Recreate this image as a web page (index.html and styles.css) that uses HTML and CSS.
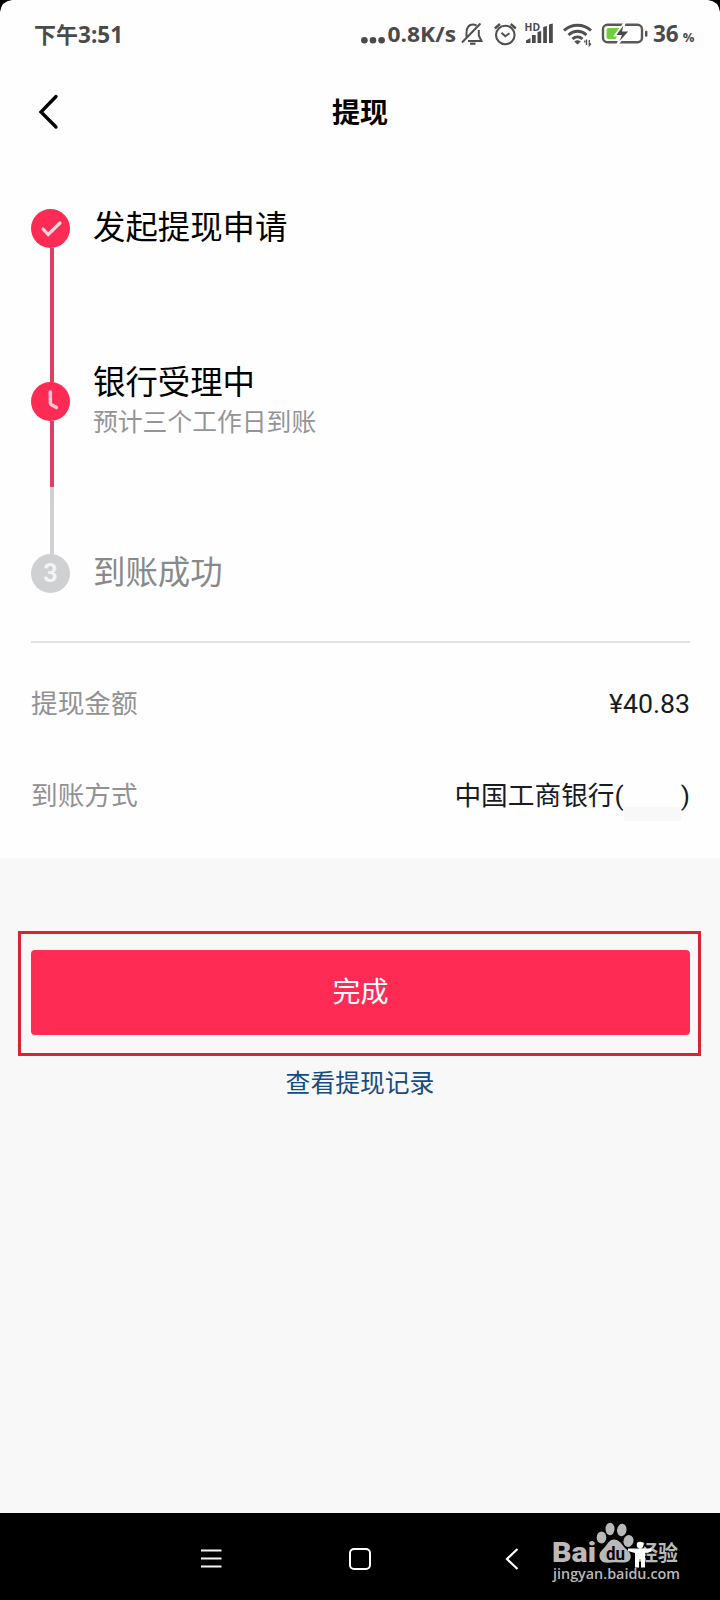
FILE: index.html
```html
<!DOCTYPE html>
<html lang="zh-CN">
<head>
<meta charset="utf-8">
<title>提现</title>
<link rel="stylesheet" href="styles.css">
</head>
<body>
<div class="screen">
  <header class="status">
    <div class="clock">下午<span class="clock-num">3:51</span></div>
    <svg class="status-icons" width="350" height="70" viewBox="350 0 350 70">
      <g fill="#4a4a4a">
        <circle cx="364.4" cy="40.3" r="3.3"/><circle cx="373" cy="40.3" r="3.3"/><circle cx="381.6" cy="40.3" r="3.3"/>
        <text class="st" x="387.500" y="42" font-size="22" textLength="68.500" lengthAdjust="spacingAndGlyphs">0.8K/s</text>
      </g>
      <g fill="none" stroke="#505050" stroke-width="2">
        <path d="M466.500 38V33C466.500 27.500 469 24.500 473 24.500C474.500 24.500 475.500 24.900 476.500 25.600M478.800 30V35.500L481.500 41H468M462 42.500L480.500 23.500"/>
        <path d="M470 43.700H475.500" stroke-width="2.200"/>
        <circle cx="505.300" cy="35" r="9.300" stroke-width="2.100"/>
        <path d="M501.500 32.800L505.300 36.300L509.500 33.200" />
        <path d="M494.800 28.500L500 24M510.700 24L515.800 28.500" stroke-width="2.400"/>
      </g>
      <g fill="#4a4a4a">
        <text class="st" x="524.500" y="31" font-size="10.500" textLength="15.500" lengthAdjust="spacingAndGlyphs">HD</text>
        <path d="M526 43v-2.500l4.500-2.500v5zM532 43v-8h3.700v8zM537.500 43v-11l3.700-1v12zM543.200 43v-16l3.700-1v17zM549 43v-18.500l3.800-1v19.500z"/>
      </g>
      <g fill="none" stroke="#505050" stroke-width="2.900">
        <path d="M564 30.500C571.500 23.500 583.500 23.500 591 30.500M568.500 35C574 30 581 30 586.500 35M572.500 39C575.500 36.200 579.500 36.200 582.500 39"/>
      </g>
      <path d="M574.200 41.500Q577.500 39 580.800 41.500L577.500 44.500z" fill="#505050"/>
      <path d="M586.500 39.500V45M584.800 42.500V40.500M589.300 40V45.500L591 43.500" stroke="#505050" stroke-width="1.300" fill="none"/>
      <rect x="603" y="24.800" width="39" height="17.500" rx="4.500" fill="#fff" stroke="#585858" stroke-width="2.400"/>
      <path d="M608.500 28H619.500L614 35.500H617.500L615.500 39H608.500Q606.500 39 606.500 37V30Q606.500 28 608.500 28z" fill="#70cf3c"/>
      <path d="M625 22L614.800 35.800H620.800L617 45L630 30.800H623z" fill="#484848" stroke="#fff" stroke-width="1.600"/>
      <rect x="645" y="30.800" width="2.400" height="6" rx="1" fill="#505050"/>
    </svg>
    <div class="percent">36<small>%</small></div>
  </header>

  <nav class="titlebar">
    <svg width="22" height="36" viewBox="0 0 22 36"><path d="M18 2.500L3 18L18 33" fill="none" stroke="#000" stroke-width="3.300" stroke-linecap="round"/></svg>
    <h1>提现</h1>
  </nav>

  <ol class="steps">
    <li class="step">
      <div class="rail">
        <svg class="dot" viewBox="0 0 39 39"><circle cx="19.500" cy="19.500" r="19.500" fill="#fe2c55"/><path d="M12 20L17.200 25.500L29 14" fill="none" stroke="#ffd5de" stroke-width="3.200" stroke-linecap="round"/></svg>
        <i class="line red"></i>
      </div>
      <div class="label">发起提现申请</div>
    </li>
    <li class="step">
      <div class="rail">
        <svg class="dot" viewBox="0 0 39 39"><circle cx="19.500" cy="19.500" r="19.500" fill="#fe2c55"/><path d="M19.300 10V20.500Q19.300 22 20.500 22.700L25.500 25.500" fill="none" stroke="#ffc5d1" stroke-width="3.500" stroke-linecap="round"/></svg>
        <i class="line red"></i>
        <i class="line grey"></i>
      </div>
      <div class="label two">银行受理中<p>预计三个工作日到账</p></div>
    </li>
    <li class="step">
      <div class="rail"><span class="dot num">3</span></div>
      <div class="label muted">到账成功</div>
    </li>
  </ol>

  <dl class="details">
    <div class="row"><dt>提现金额</dt><dd>¥40.83</dd></div>
    <div class="row"><dt>到账方式</dt><dd>中国工商银行(<span class="mask"></span>)</dd></div>
  </dl>

  <main class="actions">
    <div class="frame"><button class="done">完成</button></div>
    <a class="records">查看提现记录</a>
  </main>

  <footer class="sysnav">
    <svg width="22" height="22" viewBox="0 0 22 22"><path d="M1 2.500H21.500M1 10.500H21.500M1 18.500H21.500" stroke="#f5f5f5" stroke-width="2"/></svg>
    <svg width="22" height="22" viewBox="0 0 22 22"><rect x="1" y="1" width="20" height="20" rx="4" fill="none" stroke="#fff" stroke-width="2"/></svg>
    <svg width="22" height="22" viewBox="0 0 22 22"><path d="M19.500 1L9 11L19.500 21" fill="none" stroke="#fff" stroke-width="2.200"/></svg>
  </footer>

  <svg class="watermark" width="190" height="87" viewBox="530 1513 190 87">
    <g fill="#b9b9b9">
      <ellipse cx="601.500" cy="1537.500" rx="4.800" ry="6"/>
      <ellipse cx="610" cy="1529" rx="4.500" ry="6.200"/>
      <ellipse cx="621.800" cy="1530" rx="4.700" ry="6.200" transform="rotate(8 621.800 1530)"/>
      <ellipse cx="628.500" cy="1541" rx="5" ry="6" transform="rotate(15 628.500 1541)"/>
      <path d="M614 1539.500C619 1539.500 621.500 1544 625 1548C629 1551.500 631.500 1554 630.500 1558C629.500 1562 626 1563 621 1562.500Q614 1561.800 608 1562.700C602 1563 600 1560 599.500 1556.500C599 1552 602.500 1550 605 1547C608 1543 610 1539.500 614 1539.500z"/>
      <text class="brand" x="552" y="1562" font-size="28.500" textLength="44" lengthAdjust="spacingAndGlyphs">Bai</text>
      <text class="han" x="638" y="1560" font-size="21" textLength="40" lengthAdjust="spacingAndGlyphs">经验</text>
      <text class="url" x="553" y="1578.500" font-size="15" textLength="127" lengthAdjust="spacingAndGlyphs">jingyan.baidu.com</text>
    </g>
    <text class="du" x="606" y="1559.500" font-size="19" fill="#080808" textLength="19" lengthAdjust="spacingAndGlyphs">du</text>
    <circle cx="640" cy="1545" r="3.300" fill="#fff"/>
    <path d="M628 1548.500H651.500V1551.500L645 1553V1567.500H641V1559H639V1567.500H635V1553L628 1551z" fill="#fff"/>
  </svg>

  <svg class="corner left" width="12" height="12" viewBox="0 0 12 12"><path d="M0 0H12Q1.500 1 0 12z"/></svg>
  <svg class="corner right" width="12" height="12" viewBox="0 0 12 12"><path d="M12 0H0Q10.500 1 12 12z"/></svg>
</div>
</body>
</html>
```
FILE: styles.css
```css
* { box-sizing: border-box; }

body {
  margin: 0;
  font-family: Roboto, "Noto Sans CJK SC", sans-serif;
  color: #000;
}

h1, p, ol, dl, dd { margin: 0; padding: 0; }
svg { display: block; flex: none; }

.screen {
  position: relative;
  display: flex;
  flex-direction: column;
  width: 720px;
  height: 1600px;
  overflow: hidden;
  background: #fefefe;
}

.status {
  display: flex;
  height: 70px;
  padding-left: 34px;
  color: #4a4a4a;
  font-weight: 700;
  line-height: 68px;
  white-space: nowrap;
}
.clock {
  width: 316px;
  font-family: "Noto Sans CJK SC", sans-serif;
  font-size: 22px;
  line-height: 66px;
}
.clock-num {
  font-family: "Open Sans", "Noto Sans", sans-serif;
  font-size: 22.5px;
}
.status-icons { margin-right: -47px; }
.percent {
  font-family: "Open Sans", "Noto Sans", sans-serif;
  font-size: 22.5px;
}
.percent small { margin-left: 4px; font-size: 13px; }
.st { font-family: "Open Sans", "Noto Sans", sans-serif; font-weight: 700; }

.titlebar {
  display: grid;
  grid-template-columns: 22px 1fr 22px;
  align-items: center;
  height: 83px;
  padding: 0 38px;
}
.titlebar h1 {
  padding-top: 4px;
  font-size: 28px;
  font-weight: 700;
  line-height: 40px;
  text-align: center;
}

.steps {
  display: flex;
  flex-direction: column;
  height: 490px;
  margin: 0 30px 0 31px;
  padding-top: 56px;
  border-bottom: 2px solid #e1e2e3;
  list-style: none;
}
.step {
  display: flex;
  flex: none;
  gap: 23px;
  height: 172.5px;
}
.rail {
  display: flex;
  flex: none;
  flex-direction: column;
  width: 39px;
}
.dot { width: 39px; height: 39px; flex: none; }
.num {
  border-radius: 50%;
  background: #cfd0d2;
  color: #f4f4f4;
  font-size: 25px;
  font-weight: 700;
  line-height: 39px;
  text-align: center;
}
.line { flex: 1; width: 4px; margin-left: 19px; }
.line.red { background: #dd3f60; }
.line.grey { background: #cfd0d2; }
.label {
  font-size: 32.4px;
  line-height: 39px;
}
.label.two { margin-top: -18px; }
.label p {
  margin-top: 2px;
  color: #949497;
  font-size: 24.8px;
  line-height: 36px;
}
.muted { color: #88898c; }

.details {
  height: 215px;
  padding: 15px 30px 0 31px;
}
.row {
  display: flex;
  justify-content: space-between;
  height: 92px;
  font-size: 26.7px;
  line-height: 92px;
}
dt { color: #929295; }
dd { display: flex; color: #1a1b22; }
.mask {
  width: 57px;
  height: 14px;
  margin-top: 57px;
  background: #f8f8f8;
}

.actions {
  display: flex;
  flex: 1;
  flex-direction: column;
  padding-top: 73px;
  background: #f8f8f8;
}
.frame {
  width: 683px;
  height: 125px;
  margin-left: 18px;
  padding: 16px 8px 16px 10px;
  border: 3px solid #d7262f;
}
.done {
  display: block;
  width: 100%;
  height: 85px;
  padding: 0 0 6px;
  border: 0;
  border-radius: 4px;
  background: #fe2c55;
  color: #fff;
  font: 28px Roboto, "Noto Sans CJK SC", sans-serif;
}
.records {
  margin-top: 9px;
  color: #164c82;
  font-size: 24.8px;
  line-height: 38px;
  text-align: center;
}

.sysnav {
  display: flex;
  justify-content: center;
  gap: 127px;
  height: 87px;
  padding-top: 35px;
  background: #000;
}
.watermark { position: absolute; right: 0; bottom: 0; }
.brand { font-family: Roboto, sans-serif; font-weight: 900; }
.du { font-family: Roboto, sans-serif; font-weight: 700; }
.han { font-family: "Noto Sans CJK SC", sans-serif; font-weight: 700; }
.url { font-family: "Open Sans", "Noto Sans", sans-serif; font-weight: 600; }

.corner { position: absolute; top: 0; }
.corner.left { left: 0; }
.corner.right { right: 0; }
```
